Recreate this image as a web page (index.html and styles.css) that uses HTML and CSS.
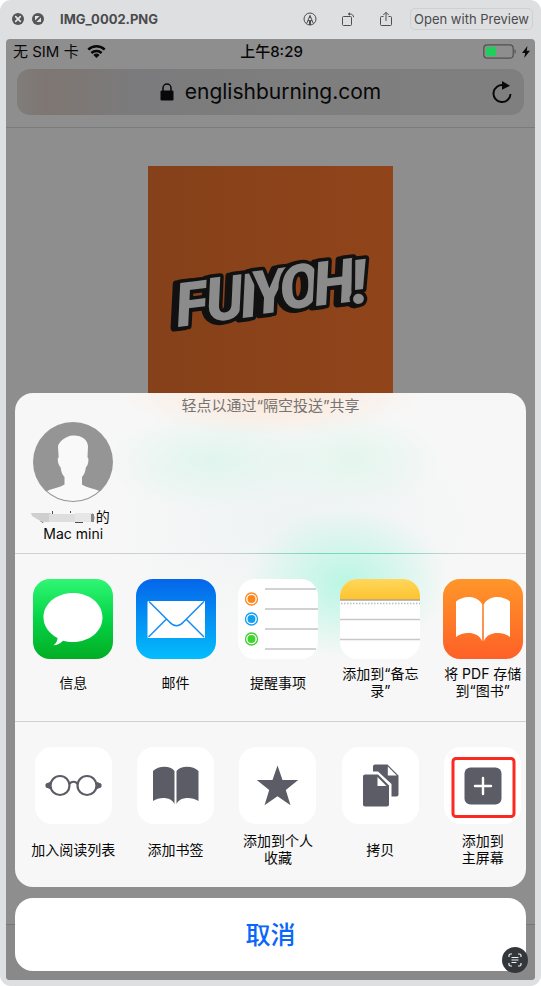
FILE: index.html
```html
<!DOCTYPE html>
<html lang="zh-CN">
<head>
<meta charset="utf-8">
<meta name="viewport" content="width=device-width, initial-scale=1">
<title>IMG_0002.PNG</title>
<link rel="stylesheet" href="styles.css">
</head>
<body>
<div class="window">
  <header class="titlebar">
    <button class="icon-button" aria-label="Close"><svg width="12" height="12" viewBox="0 0 12 12"><circle cx="6" cy="6" r="6" fill="#555658"/><path d="M3.7 3.7l4.6 4.6M8.3 3.7L3.7 8.3" stroke="#e2e3e5" stroke-width="1.7" stroke-linecap="round"/></svg></button>
    <button class="icon-button" aria-label="Full screen"><svg width="12" height="12" viewBox="0 0 12 12"><circle cx="6" cy="6" r="6" fill="#555658"/><path d="M3 7.600V3h4.600zM9 4.400V9H4.400z" fill="#e2e3e5"/><path d="M2.500 9.500l7-7" stroke="#555658" stroke-width="1"/></svg></button>
    <h1 class="file-name">IMG_0002.PNG</h1>
    <div class="tools">
      <button class="icon-button" aria-label="Markup"><svg width="14" height="14" viewBox="0 0 14 14" fill="none" stroke="#4d4e50"><circle cx="7" cy="7" r="6"/><path d="M3.700 11.500L7 3.500l3.300 8M5 8.700h4"/><path d="M7 3.200L5.900 6h2.200zM6 8.500h2V13H6z" fill="#4d4e50" stroke="none"/></svg></button>
      <button class="icon-button" aria-label="Rotate"><svg width="14" height="14" viewBox="0 0 14 14" fill="none" stroke="#4d4e50"><rect x="1.500" y="4.500" width="9" height="9" rx="1"/><path d="M7.500 2h1.600c2 0 3.300 1.200 3.600 3.200"/><path d="M9 .2v3.600L6.800 2z" fill="#4d4e50" stroke="none"/></svg></button>
      <button class="icon-button" aria-label="Share"><svg width="14" height="16" viewBox="0 0 14 16" fill="none" stroke="#4d4e50"><path d="M4.500 5.500h-2a1 1 0 0 0-1 1v7a1 1 0 0 0 1 1h9a1 1 0 0 0 1-1v-7a1 1 0 0 0-1-1h-2M7 10V1.500M4.300 4L7 1.300 9.700 4"/></svg></button>
      <button class="preview">Open with Preview</button>
    </div>
  </header>

  <main class="screen">
    <section class="browser">
      <div class="status">
        <span class="carrier">无 SIM 卡
          <svg width="19" height="13" viewBox="0 0 19 13" fill="none" stroke="#080808" stroke-width="2.500"><path d="M1.300 4.700a11.700 11.700 0 0 1 16.400 0M4.400 8a7.400 7.400 0 0 1 10.200 0"/><path d="M9.500 13L6.400 9.900a4.500 4.500 0 0 1 6.200 0z" fill="#080808" stroke="none"/></svg>
        </span>
        <time class="clock">上午8:29</time>
        <span class="power">
          <svg width="33" height="15" viewBox="0 0 33 15"><rect x=".8" y=".8" width="29.400" height="13.400" rx="3.500" fill="none" stroke="#505050" stroke-width="1.200"/><rect x="3" y="3" width="10" height="9" fill="#1fce5b"/><path d="M31.500 5c1.700.7 1.700 4.300 0 5z" fill="#505050"/></svg>
          <svg width="8" height="12" viewBox="0 0 8 12"><path d="M5.500 0L0 7h3.200L2.200 12 8 4.800H4.700z" fill="#080808"/></svg>
        </span>
      </div>
      <div class="address-bar">
        <button class="address">
          <svg width="14" height="18" viewBox="0 0 14 18"><rect x=".5" y="7.500" width="13" height="10" rx="1.300" fill="#080808"/><path d="M3 8V5a4 4 0 0 1 8 0v3" fill="none" stroke="#080808" stroke-width="1.500"/></svg>
          englishburning.com
        </button>
        <button class="icon-button" aria-label="Reload"><svg width="20" height="23" viewBox="0 0 20 23"><path d="M11.500 4.200a8.500 8.500 0 1 0 7 8.800" fill="none" stroke="#080808" stroke-width="2"/><path d="M10 0l8 4.700-8 4z" fill="#080808"/></svg></button>
      </div>
      <div class="page">
        <svg class="hero" viewBox="0 0 246 246" role="img" aria-label="FUIYOH!">
          <defs><linearGradient id="orange" x2="1"><stop stop-color="#85411a"/><stop offset="1" stop-color="#91441a"/></linearGradient></defs>
          <rect width="246" height="246" fill="url(#orange)"/>
          <text class="hero-word" x="30 60 94 105 134 168 205" y="161 156 152 149 144 140 138" rotate="-7">FUIYOH!</text>
        </svg>
      </div>
      <div class="bottom-bar"></div>
    </section>

    <section class="overlay">
      <div class="sheet">
        <div class="airdrop">
          <h2 class="hint">轻点以通过“隔空投送”共享</h2>
          <div class="row">
            <button class="item">
              <svg class="avatar" viewBox="0 0 80 80"><defs><clipPath id="disc"><circle cx="40" cy="40" r="39"/></clipPath></defs><circle cx="40" cy="40" r="40" fill="#959595"/><path clip-path="url(#disc)" fill="#f9f9f9" d="M40 13.500c8-.5 15 4 15 11l-.5 11c1.800 0 .8 8-1.500 9.500-.8 5-2 8-4 10v7.500c4 3 12 4 18.500 7L58 80H22l-9-10.500c6-3 14-4 18.500-7V55c-2-2-3.300-5-4-10-2.300-1.500-3.800-9.500-1.800-9.500L25 25c0-5 8-11.200 15-11.500z"/></svg>
              <span class="label"><span class="masked"><svg width="65" height="13" viewBox="0 0 65 13"><path d="M9 11l3 2 2-5zM21 1h1v11h-1zM39 1h1v2h-1zM44 10h8v3h-8zM60 3c4 0 5 9 0 9z" fill="#4d4d4d"/><path d="M0 3h20v9h-9L1 6z" fill="#cfcfcf"/><path d="M18 4h28v8H18z" fill="#dedede"/><path d="M44 3h17v9H44z" fill="#e6e6e6"/><path d="M60 4h3v8h-3z" fill="#888"/></svg>的</span>Mac mini</span>
            </button>
          </div>
        </div>

        <div class="row apps">
          <button class="item">
            <svg class="app" viewBox="0 0 80 80"><defs><linearGradient id="green" x2="0" y2="1"><stop stop-color="#30f674"/><stop offset=".5" stop-color="#05d446"/><stop offset="1" stop-color="#02ad24"/></linearGradient></defs><rect width="80" height="80" rx="17" fill="url(#green)"/><path d="M40 14c16.500 0 29.500 10.700 29.500 24.500S56.500 63 40 63c-3.500 0-7-.5-10-1.300-2.500 2.500-6 4.500-9.500 4.500 2.500-1.800 4-4.500 4-7.200C16 54.500 10.500 47 10.500 38.500 10.500 24.700 23.500 14 40 14z" fill="#fff"/></svg>
            <span class="label">信息</span>
          </button>
          <button class="item">
            <svg class="app" viewBox="0 0 80 80"><defs><linearGradient id="blue" x2="0" y2="1"><stop stop-color="#0565ea"/><stop offset="1" stop-color="#03bdfc"/></linearGradient></defs><rect width="80" height="80" rx="17" fill="url(#blue)"/><rect x="11.500" y="22" width="57.500" height="37" rx="1" fill="#fff"/><path d="M13 22.500l20.500 20.500c4.500 5 9.500 5 14 0L68 22.500M12.500 58L30 40.500M68 58L50.500 40.500" fill="none" stroke="#148cf4" stroke-width="1.500"/></svg>
            <span class="label">邮件</span>
          </button>
          <button class="item">
            <svg class="app" viewBox="0 0 80 80"><rect width="80" height="80" rx="17" fill="#fff"/><path d="M27 10h51M27 30h53M27 50h53M27 70h51" stroke="#c3c3c8" stroke-width="1.300"/><g fill="none" stroke-width="1.300"><circle cx="13.500" cy="20" r="6" stroke="#f78b25"/><circle cx="13.500" cy="40" r="6" stroke="#159ded"/><circle cx="13.500" cy="60" r="6" stroke="#43cc35"/></g><circle cx="13.500" cy="20" r="4" fill="#ff851b"/><circle cx="13.500" cy="40" r="4" fill="#12a0f3"/><circle cx="13.500" cy="60" r="4" fill="#3bd52c"/></svg>
            <span class="label">提醒事项</span>
          </button>
          <button class="item">
            <svg class="app" viewBox="0 0 80 80"><defs><linearGradient id="yellow" x2="0" y2="1"><stop stop-color="#ffd75c"/><stop offset="1" stop-color="#fdc32d"/></linearGradient></defs><rect width="80" height="80" rx="17" fill="#fff"/><path d="M0 21V17A17 17 0 0 1 17 0h46a17 17 0 0 1 17 17v4z" fill="url(#yellow)"/><path d="M0 21h80" stroke="#aaa596" stroke-width="1.500"/><path d="M1 24.500h79" stroke="#bdbdc2" stroke-width="1.500" stroke-dasharray="1.500 1.500"/><path d="M0 40.500h80M0 60.500h80" stroke="#c8c8cb" stroke-width="1.500"/></svg>
            <span class="label">添加到“备忘<br>录”</span>
          </button>
          <button class="item">
            <svg class="app" viewBox="0 0 80 80"><defs><linearGradient id="amber" x2="0" y2="1"><stop stop-color="#ff9629"/><stop offset="1" stop-color="#fe6027"/></linearGradient></defs><rect width="80" height="80" rx="17" fill="url(#amber)"/><path d="M39.200 62.500C36 52 20 52 13 58V22.500c8-7 22-6 26.200 3zM40.800 62.500C44 52 60 52 67 58V22.500c-8-7-22-6-26.200 3z" fill="#fff"/></svg>
            <span class="label">将 PDF 存储<br>到“图书”</span>
          </button>
        </div>

        <div class="row actions">
          <button class="item">
            <svg class="action" viewBox="0 0 77 77"><g fill="none" stroke="#5b5c66" stroke-width="2.200"><circle cx="25" cy="38.500" r="9.500"/><circle cx="52" cy="38.500" r="9.500"/><path d="M34.500 37c1.500-3 6.500-3 8 0"/></g><path d="M11 37l4-1.500v6L11 40zM66 37l-4-1.500v6l4-1.500z" fill="#5b5c66" stroke="#5b5c66"/></svg>
            <span class="label">加入阅读列表</span>
          </button>
          <button class="item">
            <svg class="action" viewBox="0 0 77 77"><path d="M37.500 57C35 50 23 49 16 54V24c5-5 17-6 21.500 0zM39.500 57C42 50 54 49 61.500 54V24c-5-5-17-6-22 0z" fill="#5b5c66"/></svg>
            <span class="label">添加书签</span>
          </button>
          <button class="item">
            <svg class="action" viewBox="0 0 77 77"><path d="M38.500 18.500l5 14.500h15.700L46.800 43l4.700 15.300-13-9-13 9L30.200 43 17.800 33h15.700z" fill="#5b5c66"/></svg>
            <span class="label">添加到个人<br>收藏</span>
          </button>
          <button class="item">
            <svg class="action" viewBox="0 0 77 77"><path d="M33 17.500h12.500l11 11v19a2 2 0 0 1-2 2H49.500V37L36 24.500h-5v-5a2 2 0 0 1 2-2z" fill="#5b5c66"/><path d="M45.800 19.500v9h9z" fill="#fff"/><path d="M23 27.500h13L47 38.500v19a2 2 0 0 1-2 2H23a2 2 0 0 1-2-2v-28a2 2 0 0 1 2-2z" fill="#5b5c66"/><path d="M35.500 30v9h9z" fill="#fff"/></svg>
            <span class="label">拷贝</span>
          </button>
          <button class="item">
            <svg class="action" viewBox="0 0 77 77"><rect x="20.500" y="20.500" width="37" height="37" rx="6" fill="#5b5c66"/><path d="M31 39h16M39 31v16" stroke="#fff" stroke-width="2.400" stroke-linecap="round"/><rect x="9" y="11.500" width="61" height="58" rx="3" fill="none" stroke="#fb2920" stroke-width="3"/></svg>
            <span class="label">添加到<br>主屏幕</span>
          </button>
        </div>
      </div>
      <button class="cancel">取消</button>
      <button class="live-text" aria-label="Live Text"><svg width="14" height="14" viewBox="0 0 14 14" fill="none" stroke="#f2f2f2" stroke-width="1.200"><path d="M1 4V2.500A1.500 1.500 0 0 1 2.500 1H4M10 1h1.500A1.500 1.500 0 0 1 13 2.500V4M13 10v1.500a1.500 1.500 0 0 1-1.500 1.500H10M4 13H2.500A1.500 1.500 0 0 1 1 11.500V10M3.500 4.500h7M3.500 7h7M3.500 9.500h5"/></svg></button>
    </section>
  </main>
</div>
</body>
</html>
```
FILE: styles.css
```css
* {
  box-sizing: border-box;
}

body {
  margin: 0;
  background: #fff;
  font-family: Inter, "Noto Sans CJK SC", sans-serif;
  color: #080808;
}

button {
  padding: 0;
  border: 0;
  background: none;
  font: inherit;
  color: inherit;
}

svg {
  display: block;
}

.window {
  display: flex;
  flex-direction: column;
  min-height: 100vh;
  padding: 0 6px 6px;
  border-radius: 11px;
  background: #dedfe1;
}

.titlebar {
  display: flex;
  align-items: center;
  gap: 8px;
  height: 39px;
  padding: 0 2px 1px 6px;
}

.file-name {
  margin: 0 0 0 8px;
  font-size: 13px;
  line-height: 20px;
  font-weight: 700;
  color: #4a4b4d;
}

.tools {
  display: flex;
  align-items: center;
  gap: 24px;
  margin-left: auto;
}

.preview {
  height: 22px;
  margin-left: -7px;
  padding: 0 3px;
  border: 1px solid #cfd0d2;
  border-radius: 5px;
  font-size: 13px;
  line-height: 20px;
  color: #4a4b4d;
}

.screen {
  display: grid;
  flex: 1;
  overflow: hidden;
  border-radius: 4px;
  background: #8e8e8e;
}

.browser,
.overlay {
  grid-area: 1 / 1;
  min-width: 0;
}

.browser {
  display: flex;
  flex-direction: column;
}

.status {
  display: grid;
  grid-template-columns: 1fr auto 1fr;
  align-items: center;
  height: 25px;
  padding: 0 5px 0 7px;
  font-size: 15px;
  line-height: 24px;
}

.carrier,
.power {
  display: flex;
  align-items: center;
  gap: 8px;
}

.power {
  gap: 6px;
  justify-content: flex-end;
}

.clock {
  font-weight: 500;
}

.address-bar {
  display: flex;
  align-items: center;
  height: 46px;
  margin: 5px 11px 12px;
  padding: 0 12px 0 32px;
  border-radius: 13px;
  background: linear-gradient(90deg, #807d7b 0, #7e7672 6%, #7d7876 13%, #7b7b7d 24%, #7e7e7e 55%, #7f7f7f);
}

.address {
  display: flex;
  flex: 1;
  align-items: center;
  justify-content: center;
  gap: 11px;
  font-size: 21px;
  line-height: 30px;
}

.page {
  flex: 1;
  padding-top: 38px;
  border-top: 1px solid #7b7b7b;
}

.hero {
  width: 46.5%;
  margin: 0 auto;
}

.hero-word {
  fill: #8b8b8b;
  stroke: #111;
  stroke-width: 7px;
  stroke-linejoin: round;
  paint-order: stroke;
  filter: drop-shadow(-4px 1px 0 #111);
  font-family: Roboto, sans-serif;
  font-size: 61px;
  font-weight: 900;
  font-style: italic;
}

.bottom-bar {
  height: 56px;
  border-top: 1px solid #777;
  background: #898989;
}

.overlay {
  position: relative;
  display: flex;
  flex-direction: column;
  justify-content: flex-end;
  gap: 11px;
  padding: 0 9px 9px;
}

.sheet {
  overflow: hidden;
  border-radius: 18px;
  background:
    radial-gradient(ellipse 150px 44px at 50% 0, #fde5d4, #fde5d400),
    radial-gradient(ellipse 110px 50px at 39% 68px, #e0f5ed, #e0f5ed00),
    radial-gradient(ellipse 90px 50px at 66% 68px, #e4f6ee, #e4f6ee00),
    radial-gradient(ellipse 100px 75px at 65% 190px, #b9f6e3, #b9f6e300),
    radial-gradient(ellipse 190px 110px at 55% 130px, #eef3f4, #eef3f400),
    #f7f7f7;
}

.airdrop {
  padding-top: 3px;
}

.hint {
  margin: 0 0 6px;
  font-size: 15px;
  line-height: 20px;
  font-weight: 400;
  text-align: center;
  color: #747474;
}

.row {
  display: grid;
  grid-template-columns: repeat(5, 20%);
  margin-right: -8px;
  padding-left: 7px;
}

.item {
  display: flex;
  flex-direction: column;
  align-items: center;
}

.avatar,
.app {
  width: 80px;
  height: 80px;
}

.action {
  width: 77px;
  height: 77px;
  border-radius: 17px;
  background: #fff;
}

.label {
  display: flex;
  flex-direction: column;
  justify-content: center;
  height: 34px;
  margin-top: 6px;
  font-size: 14px;
  line-height: 17px;
  white-space: nowrap;
}

.actions .label {
  margin-top: 8px;
}

.masked {
  display: flex;
  align-items: center;
  margin-left: -6px;
}

.airdrop .label {
  margin-bottom: 11px;
}

.apps {
  padding-top: 25px;
  padding-bottom: 22px;
  border-top: 1px solid #cfd4d6;
  border-image: linear-gradient(90deg, #cfcfd6 40%, #78d9b9 58%, #78d9b9 72%, #cfd3d6 85%) 1;
}

.actions {
  padding-top: 25px;
  padding-bottom: 21px;
  border-top: 1px solid #cfcfd4;
}

.cancel {
  height: 73px;
  border-radius: 18px;
  background: #fff;
  font-size: 25px;
  line-height: 36px;
  font-weight: 500;
  color: #0a66fa;
}

.live-text {
  position: absolute;
  right: 7px;
  bottom: 7px;
  display: grid;
  place-items: center;
  width: 26px;
  height: 26px;
  border-radius: 50%;
  background: #33373b;
}
```
